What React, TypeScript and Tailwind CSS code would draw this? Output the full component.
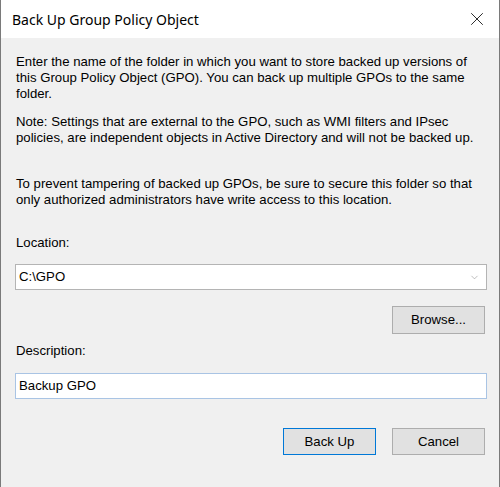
import { ChevronDown, X } from "lucide-react";

export default function App() {
  return (
    <div className="w-[500px] h-[487px] bg-[#f0f0f0] border-x border-x-[#7a7a7a] flex flex-col text-black overflow-hidden">
      <div className="h-[38px] bg-white flex items-center justify-between pl-[11px] pr-[11px] shrink-0">
        <span className="text-[14px] font-['Segoe_UI','Noto_Sans',sans-serif] text-black">
          Back Up Group Policy Object
        </span>
        <X size={22} strokeWidth={0.9} className="text-black" />
      </div>

      <div className="flex flex-col pl-[14px] pr-[12px] pt-[16px] text-[13.2px] leading-[16px] font-['Liberation_Sans',Arial,sans-serif]">
        <p className="ml-[1px]">
          Enter the name of the folder in which you want to store backed up versions of
          <br />
          this Group Policy Object (GPO). You can back up multiple GPOs to the same
          <br />
          folder.
        </p>
        <p className="ml-[1px] mt-[12px]">
          Note: Settings that are external to the GPO, such as WMI filters and IPsec
          <br />
          policies, are independent objects in Active Directory and will not be backed up.
        </p>
        <p className="ml-[1px] mt-[30px]">
          To prevent tampering of backed up GPOs, be sure to secure this folder so that
          <br />
          only authorized administrators have write access to this location.
        </p>

        <label className="ml-[1px] mt-[27px]">Location:</label>
        <div className="mt-[13px] h-[26px] bg-white border border-[#b4b4b4] flex items-center justify-between pl-[3px] pr-[6px]">
          <span>C:\GPO</span>
          <ChevronDown size={11} strokeWidth={1.2} className="text-[#8a8a8a]" />
        </div>
        <div className="mt-[16px] mr-[2px] flex justify-end">
          <button className="w-[93px] h-[28px] bg-[#e1e1e1] border border-[#adadad]">Browse...</button>
        </div>

        <label className="ml-[1px] mt-[9px]">Description:</label>
        <div className="mt-[14px] h-[26px] bg-white border border-[#a9c4e4] flex items-center pl-[3px]">
          <span>Backup GPO</span>
        </div>

        <div className="mt-[29px] mr-[2px] flex justify-end gap-[16px]">
          <button className="w-[93px] h-[27px] bg-[#e1e1e1] border border-[#0078d7]">Back Up</button>
          <button className="w-[93px] h-[27px] bg-[#e1e1e1] border border-[#adadad]">Cancel</button>
        </div>
      </div>
    </div>
  );
}
